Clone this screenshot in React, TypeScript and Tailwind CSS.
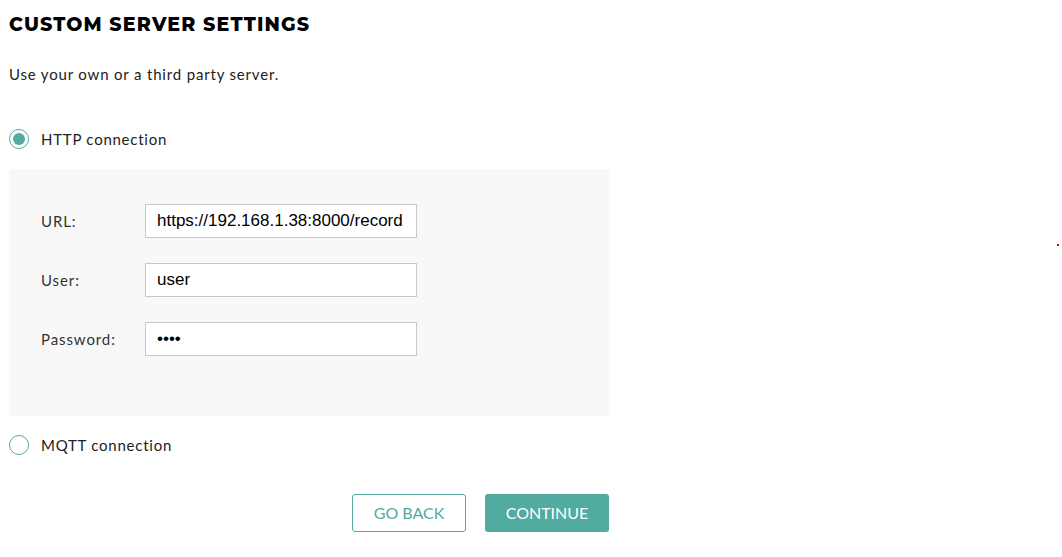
const heading = { fontFamily: "Montserrat, 'Inter', 'Noto Sans', sans-serif" } as const;
const body = { fontFamily: "Lato, 'Noto Sans', sans-serif" } as const;
const field = { fontFamily: "'Liberation Sans', Arial, sans-serif" } as const;

function Radio({ checked, label }: { checked: boolean; label: string }) {
  return (
    <label className="flex items-center gap-3 cursor-pointer">
      <span className="w-5 h-5 rounded-full border border-[#52ab9f] flex items-center justify-center bg-white">
        {checked && <span className="w-3 h-3 rounded-full bg-[#52ab9f]" />}
      </span>
      <span className="text-[15px] tracking-[0.05em] text-[#222]" style={body}>
        {label}
      </span>
    </label>
  );
}

function Field({ label, value, type = "text" }: { label: string; value: string; type?: string }) {
  return (
    <div className="flex items-center">
      <span className="w-[104px] text-[15px] tracking-[0.06em] text-[#333]" style={body}>
        {label}
      </span>
      <input
        type={type}
        defaultValue={value}
        className="w-[272px] h-[34px] border border-[#c8c8c8] bg-white px-[11px] text-[17px] text-black outline-none"
        style={field}
      />
    </div>
  );
}

export default function App() {
  return (
    <div className="relative min-h-[557px] bg-white px-[9px] pt-[13px]">
      <div className="w-[600px]">
        <h1 className="text-[19px] font-extrabold tracking-[0.06em] text-black uppercase leading-6" style={heading}>
          Custom Server Settings
        </h1>
        <p className="mt-[26px] text-[15px] tracking-[0.055em] text-[#222]" style={body}>
          Use your own or a third party server.
        </p>

        <div className="mt-[42px]">
          <Radio checked label="HTTP connection" />
        </div>

        <div className="mt-[19px] h-[247px] bg-[#f8f8f8] pl-8 pt-[35px] flex flex-col gap-[25px]">
          <Field label="URL:" value="https://192.168.1.38:8000/record" />
          <Field label="User:" value="user" />
          <Field label="Password:" value="1234" type="password" />
        </div>

        <div className="mt-[18px]">
          <Radio checked={false} label="MQTT connection" />
        </div>

        <div className="mt-[37px] flex justify-end gap-[19px]">
          <button
            className="w-[114px] h-[38px] rounded-[3px] border border-[#52ab9f] bg-white text-[#52ab9f] text-[16px] uppercase"
            style={body}
          >
            Go Back
          </button>
          <button
            className="w-[124px] h-[38px] rounded-[3px] bg-[#52ab9f] text-white text-[16px] uppercase"
            style={body}
          >
            Continue
          </button>
        </div>
      </div>
      <span className="absolute left-[1057px] top-[244px] w-[2px] h-[2px] bg-[#e8002a]" />
    </div>
  );
}
